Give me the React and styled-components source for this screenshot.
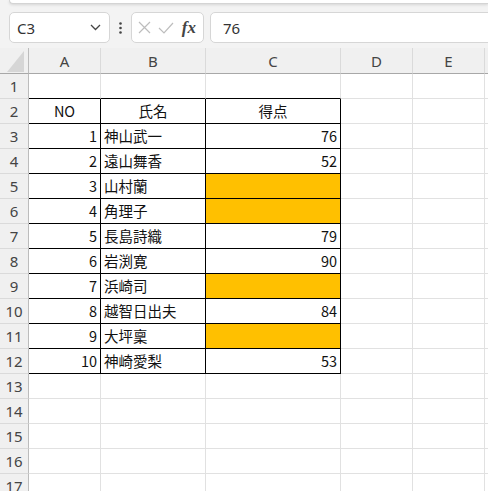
import React from 'react'
import styled, { createGlobalStyle } from 'styled-components'

const GlobalStyle = createGlobalStyle`
  html, body {
    margin: 0;
    padding: 0;
    background: #f3f3f3;
    overflow: hidden;
  }
  body {
    font-family: 'Noto Sans', 'Noto Sans CJK JP', sans-serif;
  }
`

const Page = styled.div`
  width: 488px;
  height: 491px;
  overflow: hidden;
  background: #f3f3f3;
`

const Ribbon = styled.div`
  height: 3px;
  margin-left: 9px;
  background: #fff;
  border-left: 1px solid #d4d4d4;
  border-bottom: 1px solid #d4d4d4;
  border-bottom-left-radius: 6px;
  box-shadow: 0 1px 3px rgba(0, 0, 0, 0.12);
`

const FormulaBar = styled.div`
  display: flex;
  align-items: center;
  height: 31px;
  padding: 8px 0 5px 9px;
  overflow: hidden;
`

const Box = styled.div`
  box-sizing: border-box;
  flex-shrink: 0;
  height: 31px;
  display: flex;
  align-items: center;
  background: #fff;
  border: 1px solid #d6d6d6;
  border-radius: 5px;
`

const NameBox = styled(Box)`
  width: 101px;
  padding: 0 8px 0 7px;
  justify-content: space-between;
  font-size: 15px;
  color: #333;
`

const Dots = styled.div`
  flex-shrink: 0;
  width: 21px;
  display: flex;
  justify-content: center;
`

const FxBox = styled(Box)`
  width: 73px;
  padding: 0 7px 0 6px;
  justify-content: space-between;
`

const Fx = styled.span`
  font-family: 'Liberation Serif', serif;
  font-style: italic;
  font-weight: bold;
  font-size: 17px;
  color: #444;
`

const Input = styled(Box)`
  width: 320px;
  margin-left: 6px;
  padding-left: 12px;
  font-size: 15px;
  color: #333;
`

const Sheet = styled.div`
  display: grid;
  grid-template-columns: 29px 72px 105px 135px 72px 72px 72px;
  grid-template-rows: 26px;
  grid-auto-rows: 25px;
`

const Head = styled.div`
  box-sizing: border-box;
  display: flex;
  align-items: center;
  justify-content: center;
  background: #f0f0f0;
  color: #444;
  font-size: 15px;
  border-right: 1px solid ${p => (p.$row ? '#bcbcbc' : '#dadada')};
  border-bottom: 1px solid ${p => (p.$row ? '#dadada' : '#a8a8a8')};
`

const Corner = styled(Head)`
  border-right: 1px solid #bcbcbc;
  justify-content: flex-end;
  align-items: flex-end;
  padding: 0 3px 1px 0;
`

const Cell = styled.div`
  box-sizing: border-box;
  display: flex;
  align-items: flex-end;
  justify-content: ${p => p.$align || 'flex-start'};
  padding: 0 3px 2px 3px;
  background: ${p => (p.$fill ? '#ffc000' : '#fff')};
  border-right: 1px solid ${p => (p.$edgeR ? '#000' : '#e1e1e1')};
  border-bottom: 1px solid ${p => (p.$edgeB ? '#000' : '#e1e1e1')};
  font-family: 'Noto Sans CJK JP', sans-serif;
  font-size: 14.5px;
  line-height: 20px;
  color: #111;
  white-space: nowrap;
  overflow: hidden;
`

const cols = ['A', 'B', 'C', 'D', 'E', 'F']

const data = [
  ['1', '神山武一', '76'],
  ['2', '遠山舞香', '52'],
  ['3', '山村蘭', null],
  ['4', '角理子', null],
  ['5', '長島詩織', '79'],
  ['6', '岩渕寛', '90'],
  ['7', '浜崎司', null],
  ['8', '越智日出夫', '84'],
  ['9', '大坪稟', null],
  ['10', '神崎愛梨', '53'],
]

const rowCells = r => {
  if (r === 1) {
    return cols.map((c, i) => <Cell key={c} $edgeB={i < 3} />)
  }
  if (r === 2) {
    return cols.map((c, i) => {
      if (i >= 3) return <Cell key={c} />
      const label = ['NO', '氏名', '得点'][i]
      return <Cell key={c} $align="center" $edgeR $edgeB>{label}</Cell>
    })
  }
  const row = data[r - 3]
  if (row) {
    return [
      <Cell key="A" $align="flex-end" $edgeR $edgeB>{row[0]}</Cell>,
      <Cell key="B" $edgeR $edgeB>{row[1]}</Cell>,
      <Cell key="C" $align="flex-end" $edgeR $edgeB $fill={row[2] === null}>{row[2]}</Cell>,
      <Cell key="D" />,
      <Cell key="E" />,
      <Cell key="F" />,
    ]
  }
  return cols.map(c => <Cell key={c} />)
}

export default function App() {
  const rows = Array.from({ length: 17 }, (_, i) => i + 1)
  return (
    <Page>
      <GlobalStyle />
      <Ribbon />
      <FormulaBar>
        <NameBox>
          <span>C3</span>
          <svg width="11" height="7" viewBox="0 0 11 7">
            <path d="M1 1l4.5 4.5L10 1" fill="none" stroke="#444" strokeWidth="1.3" />
          </svg>
        </NameBox>
        <Dots>
          <svg width="3" height="12" viewBox="0 0 3 12">
            <circle cx="1.5" cy="1.5" r="1.3" fill="#444" />
            <circle cx="1.5" cy="6" r="1.3" fill="#444" />
            <circle cx="1.5" cy="10.5" r="1.3" fill="#444" />
          </svg>
        </Dots>
        <FxBox>
          <svg width="13" height="13" viewBox="0 0 13 13">
            <path d="M1 1l11 11M12 1L1 12" stroke="#bdbdbd" strokeWidth="1.2" />
          </svg>
          <svg width="16" height="12" viewBox="0 0 16 12">
            <path d="M1 6l5 5L15 1" fill="none" stroke="#bdbdbd" strokeWidth="1.2" />
          </svg>
          <Fx>fx</Fx>
        </FxBox>
        <Input>76</Input>
      </FormulaBar>
      <Sheet>
        <Corner>
          <svg width="18" height="21" viewBox="0 0 18 21">
            <polygon points="17,0 17,21 0,21" fill="#d6d6d6" />
          </svg>
        </Corner>
        {cols.map(c => (
          <Head key={c}>{c === 'F' ? '' : c}</Head>
        ))}
        {rows.map(r => (
          <React.Fragment key={r}>
            <Head $row>{r}</Head>
            {rowCells(r)}
          </React.Fragment>
        ))}
      </Sheet>
    </Page>
  )
}
